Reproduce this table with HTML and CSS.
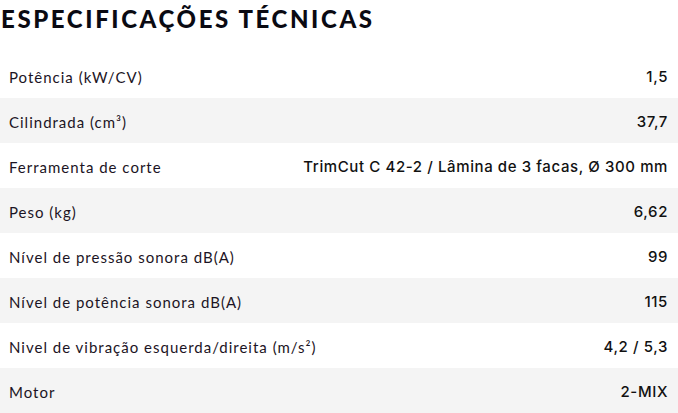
FILE: index.html
```html
<!DOCTYPE html>
<html lang="pt">
<head>
<meta charset="utf-8">
<link rel="stylesheet" href="styles.css">
</head>
<body>
<section class="specs">
  <h2 class="specs-title">ESPECIFICAÇÕES TÉCNICAS</h2>
  <div class="spec-list">
    <div class="spec-row"><span class="spec-label">Potência (kW/CV)</span><span class="spec-value">1,5</span></div>
    <div class="spec-row alt"><span class="spec-label">Cilindrada (cm³)</span><span class="spec-value">37,7</span></div>
    <div class="spec-row"><span class="spec-label">Ferramenta de corte</span><span class="spec-value">TrimCut C 42-2 / Lâmina de 3 facas, Ø 300 mm</span></div>
    <div class="spec-row alt"><span class="spec-label">Peso (kg)</span><span class="spec-value">6,62</span></div>
    <div class="spec-row"><span class="spec-label">Nível de pressão sonora dB(A)</span><span class="spec-value">99</span></div>
    <div class="spec-row alt"><span class="spec-label">Nível de potência sonora dB(A)</span><span class="spec-value">115</span></div>
    <div class="spec-row"><span class="spec-label">Nivel de vibração esquerda/direita (m/s²)</span><span class="spec-value">4,2 / 5,3</span></div>
    <div class="spec-row alt"><span class="spec-label">Motor</span><span class="spec-value">2-MIX</span></div>
  </div>
</section>
</body>
</html>
```
FILE: styles.css
```css
html, body {
  margin: 0;
  padding: 0;
  background: #ffffff;
}
body {
  font-family: "Lato", "Open Sans", sans-serif;
  color: #1c1424;
}
.specs {
  width: 678px;
}
.specs-title {
  margin: 0;
  height: 53px;
  padding: 3px 0 0 1px;
  box-sizing: border-box;
  font-family: "Lato", sans-serif;
  font-weight: 900;
  font-size: 24px;
  line-height: 32px;
  letter-spacing: 2.6px;
  color: #0a0a12;
}
.spec-list {
  display: flex;
  flex-direction: column;
}
.spec-row {
  height: 45px;
  display: flex;
  align-items: center;
  justify-content: space-between;
  padding: 2px 10px 0 9px;
  box-sizing: border-box;
  font-size: 15px;
}
.spec-row.alt {
  background: #f4f4f4;
}
.spec-label {
  font-weight: 400;
  letter-spacing: 1px;
}
.spec-value {
  font-family: "Inter", "Lato", sans-serif;
  font-weight: 500;
  letter-spacing: 0.6px;
  color: #111111;
}
```
